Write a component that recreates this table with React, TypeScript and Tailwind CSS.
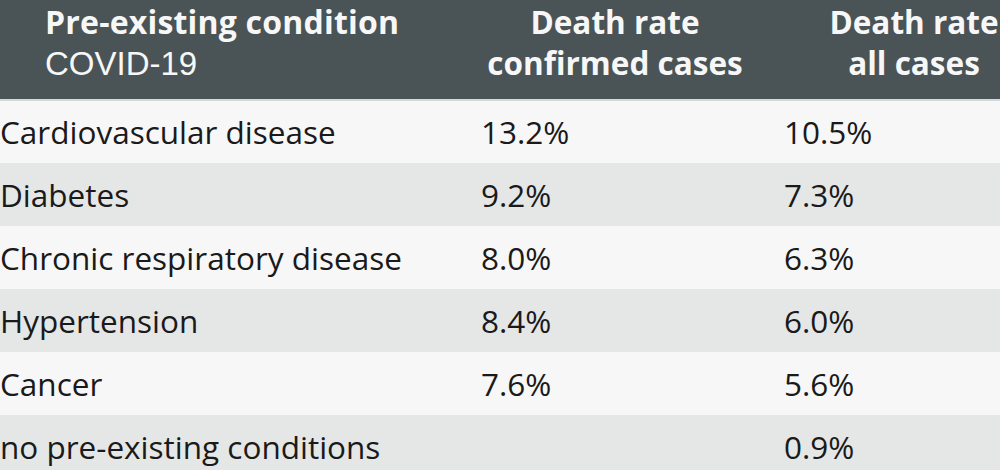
import React from "react";

const rows: { name: string; a: string; b: string }[] = [
  { name: "Cardiovascular disease", a: "13.2%", b: "10.5%" },
  { name: "Diabetes", a: "9.2%", b: "7.3%" },
  { name: "Chronic respiratory disease", a: "8.0%", b: "6.3%" },
  { name: "Hypertension", a: "8.4%", b: "6.0%" },
  { name: "Cancer", a: "7.6%", b: "5.6%" },
  { name: "no pre-existing conditions", a: "", b: "0.9%" },
];

export default function App() {
  return (
    <div className="w-[1000px] h-[470px] overflow-hidden bg-[#f7f7f7]">
      <div className="w-[1050px] font-['Open_Sans',sans-serif]">
        <div className="flex h-[101px] bg-[#4a5456] text-[#f7f7f7] border-b-2 border-[#d3d8d9]">
          <div className="w-[477px] pl-[45px] pt-[2px]">
            <div className="text-[32px] font-bold leading-[40px] tracking-[0.2px] whitespace-nowrap">Pre-existing condition</div>
            <div className="text-[33px] leading-[43px] font-['Liberation_Sans',Arial,sans-serif] whitespace-nowrap">COVID-19</div>
          </div>
          <div className="w-[276px] pt-[2px] text-center text-[31.5px] font-bold whitespace-nowrap">
            <div className="leading-[40px]">Death rate</div>
            <div className="leading-[42px]">confirmed cases</div>
          </div>
          <div className="w-[262px] ml-[30px] pt-[2px] text-center text-[31.5px] font-bold whitespace-nowrap">
            <div className="leading-[40px]">Death rate</div>
            <div className="leading-[42px]">all cases</div>
          </div>
        </div>
        {rows.map((r, i) => (
          <div
            key={r.name}
            className={`flex items-center text-[31.5px] text-[#1a1a1a] ${i === 0 ? "h-[62px]" : "h-[63px]"} ${i % 2 === 0 ? "bg-[#f7f7f7]" : "bg-[#e5e7e7]"}`}
          >
            <div className="w-[481px] whitespace-nowrap">{r.name}</div>
            <div className="w-[303px]">{r.a}</div>
            <div className="flex-1">{r.b}</div>
          </div>
        ))}
      </div>
    </div>
  );
}
